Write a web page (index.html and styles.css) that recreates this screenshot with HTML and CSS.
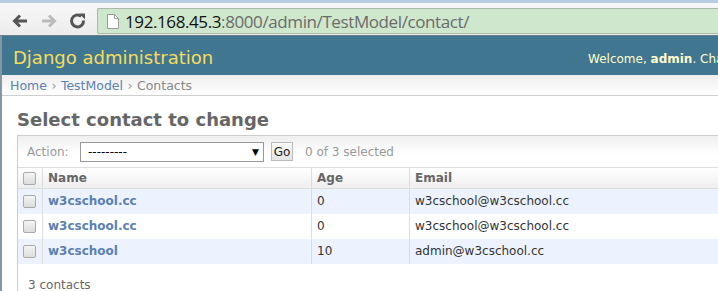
FILE: index.html
```html
<!DOCTYPE html>
<html>
<head>
<meta charset="utf-8">
<link rel="stylesheet" href="styles.css">
</head>
<body>
<div class="toolbar">
  <div class="nav">
    <svg class="ico" width="20" height="20" viewBox="0 0 20 20"><path d="M17 10H5M10 4.5L4.5 10L10 15.5" fill="none" stroke="#555" stroke-width="3"/></svg>
    <svg class="ico" width="20" height="20" viewBox="0 0 20 20"><path d="M3 10H15M10 4.5L15.5 10L10 15.5" fill="none" stroke="#bbb" stroke-width="3"/></svg>
    <svg class="ico" width="20" height="20" viewBox="0 0 20 20"><path d="M15.5 9.5A6 6 0 1 1 13.2 5.2" fill="none" stroke="#555" stroke-width="3"/><path d="M11 2.5L17 2.5L17 8.5Z" fill="#555"/></svg>
  </div>
  <div class="omnibox">
    <svg class="page" width="12" height="15" viewBox="0 0 12 15"><path d="M0.5 0.5H7.5L11.5 4.5V14.5H0.5Z" fill="#fff" stroke="#999"/><path d="M7.5 0.5V4.5H11.5" fill="none" stroke="#999"/></svg>
    <span class="host">192.168.45.3</span><span class="path">:8000/admin/TestModel/contact/</span>
  </div>
</div>
<div class="window">
  <div class="header">
    <div class="brand">Django administration</div>
    <div class="user">Welcome, <b>admin</b>. Change password / Log out</div>
  </div>
  <div class="crumbs"><a>Home</a> › <a>TestModel</a> › <span class="cur">Contacts</span></div>
  <div class="content">
    <h1>Select contact to change</h1>
    <div class="changelist">
      <div class="actions">
        <span class="lbl">Action:</span>
        <div class="select"><span>---------</span><span class="arr">▼</span></div>
        <div class="go">Go</div>
        <span class="count">0 of 3 selected</span>
      </div>
      <table>
        <thead>
          <tr><th class="cb"><span class="box"></span></th><th class="c-name">Name</th><th class="c-age">Age</th><th>Email</th></tr>
        </thead>
        <tbody>
          <tr class="r1"><td class="cb"><span class="box"></span></td><td><a>w3cschool.cc</a></td><td>0</td><td>w3cschool@w3cschool.cc</td></tr>
          <tr class="r2"><td class="cb"><span class="box"></span></td><td><a>w3cschool.cc</a></td><td>0</td><td>w3cschool@w3cschool.cc</td></tr>
          <tr class="r1"><td class="cb"><span class="box"></span></td><td><a>w3cschool</a></td><td>10</td><td>admin@w3cschool.cc</td></tr>
        </tbody>
      </table>
      <div class="paginator">3 contacts</div>
    </div>
  </div>
</div>
</body>
</html>
```
FILE: styles.css
```css
html, body { margin: 0; padding: 0; }
body { width: 718px; height: 291px; overflow: hidden; background: #fff; font-family: "DejaVu Sans", Verdana, sans-serif; }
.toolbar {
  height: 36px; box-sizing: border-box; border-bottom: 1px solid #6a7c8a;
  background: linear-gradient(#f8f8f8, #ececec);
  display: flex; align-items: center; padding: 4px 0 0 10px;
  border-top: 3px solid #b9cde0;
}
.nav { display: flex; gap: 9px; width: 87px; }
.omnibox {
  flex: 1; height: 26px; box-sizing: border-box; margin-top: 0;
  background: #cfe7cd; border: 1px solid #a9b9a8; border-right: none; border-radius: 2px 0 0 2px;
  display: flex; align-items: center; padding-left: 9px;
  font-family: "Open Sans", "Liberation Sans", sans-serif; font-size: 17px; letter-spacing: -0.4px;
}
.page { margin-right: 6px; }
.host { color: #111; }
.path { color: #6b6b6b; }
.window { border-left: 2px solid #8596a5; }
.header {
  height: 39px; background: #417690; display: flex; align-items: center; justify-content: space-between;
  padding: 0 0 0 11px; white-space: nowrap; overflow: hidden;
}
.brand { color: #f5dd5d; font-size: 18px; margin-top: 3px; }
.user { color: #ffc; font-size: 12px; margin-left: auto; padding-left: 20px; width: 130px; overflow: hidden; flex: none; margin-top: 7px; }
.crumbs {
  height: 21px; box-sizing: border-box; background: linear-gradient(#eeeeee, #ffffff);
  border-bottom: 1px solid #cfcfcf; font-size: 12.5px; color: #999; padding: 3px 0 0 8px; word-spacing: 0.5px;
}
.crumbs a { color: #5b80b2; }
.crumbs .cur { color: #888; }
.content { padding: 12px 0 0 15px; }
h1 { margin: 0 0 3px 0; font-size: 18px; color: #666; font-weight: bold; line-height: 24px; }
.changelist { border: 1px solid #ccc; border-right: none; border-bottom: none; }
.actions {
  height: 32px; box-sizing: border-box; background: linear-gradient(#efefef, #fff 60%);
  border-bottom: 1px solid #ddd; display: flex; align-items: center; padding-left: 9px;
  font-size: 12px; color: #999;
}
.lbl { width: 53px; }
.select {
  width: 184px; height: 20px; box-sizing: border-box; border: 1px solid #999; background: #fff;
  display: flex; align-items: center; justify-content: space-between; padding: 0 4px 0 7px; color: #000;
}
.arr { font-size: 9px; color: #000; }
.go {
  margin-left: 7px; width: 22px; height: 19px; box-sizing: border-box; border: 1px solid #bbb;
  background: linear-gradient(#fafafa, #e4e4e4); color: #222; display: flex; align-items: center; justify-content: center;
}
.count { margin-left: 12px; }
table { border-collapse: collapse; width: 100%; font-size: 12px; }
th {
  height: 20px; text-align: left; font-weight: bold; color: #666; padding: 0 5px;
  background: linear-gradient(#fff, #eee); border-bottom: 1px solid #ddd; border-left: 1px solid #ddd;
}
td { height: 25px; padding: 0 5px; color: #333; border-left: 1px solid #ddd; box-sizing: border-box; }
th.cb, td.cb { border-left: none; width: 14px; padding: 0 5px 0 5px; }
.c-name { width: 258px; }
.c-age { width: 87px; }
td a { color: #5b80b2; font-weight: bold; }
.r1 td { background: #edf3fe; }
.r2 td { background: #fff; }
.box {
  display: block; width: 11px; height: 11px; border: 1px solid #aaa; border-radius: 2px;
  background: linear-gradient(#f4f4f4, #dcdcdc);
}
.paginator { padding: 14px 0 0 10px; font-size: 12px; color: #666; }
```
